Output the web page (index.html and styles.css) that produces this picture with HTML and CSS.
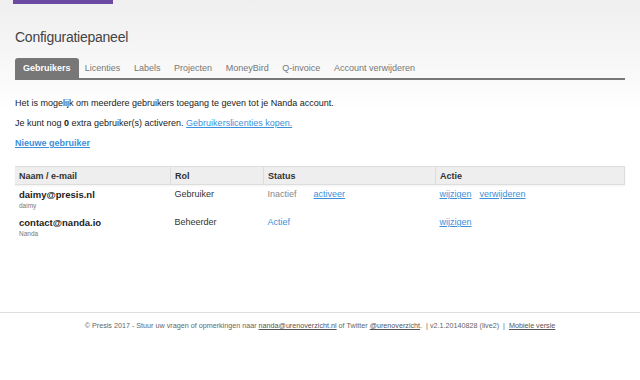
FILE: index.html
```html
<!DOCTYPE html>
<html lang="nl">
<head>
<meta charset="utf-8">
<title>Configuratiepaneel</title>
<link rel="stylesheet" href="styles.css">
</head>
<body>
<div class="page">
  <div class="topbar"><div class="brand"></div></div>
  <main class="content">
    <h1 class="title">Configuratiepaneel</h1>
    <nav class="tabs">
      <a class="tab active">Gebruikers</a>
      <a class="tab">Licenties</a>
      <a class="tab">Labels</a>
      <a class="tab">Projecten</a>
      <a class="tab">MoneyBird</a>
      <a class="tab">Q-invoice</a>
      <a class="tab">Account verwijderen</a>
    </nav>
    <p class="text first">Het is mogelijk om meerdere gebruikers toegang te geven tot je Nanda account.</p>
    <p class="text">Je kunt nog <b>0</b> extra gebruiker(s) activeren. <a class="link">Gebruikerslicenties kopen.</a></p>
    <p class="text"><a class="link strong">Nieuwe gebruiker</a></p>
    <table class="users">
      <thead>
        <tr>
          <th class="c1">Naam / e-mail</th>
          <th class="c2">Rol</th>
          <th class="c3">Status</th>
          <th class="c4">Actie</th>
        </tr>
      </thead>
      <tbody>
        <tr>
          <td><div class="email">daimy@presis.nl</div><div class="uname">daimy</div></td>
          <td>Gebruiker</td>
          <td><span class="inactive">Inactief</span><a class="link act">activeer</a></td>
          <td><a class="link">wijzigen</a><a class="link gap">verwijderen</a></td>
        </tr>
        <tr>
          <td><div class="email">contact@nanda.io</div><div class="uname">Nanda</div></td>
          <td>Beheerder</td>
          <td><span class="active-st">Actief</span></td>
          <td><a class="link">wijzigen</a></td>
        </tr>
      </tbody>
    </table>
  </main>
  <footer class="footer">
    <p>© Presis 2017 - Stuur uw vragen of opmerkingen naar <a class="flink">nanda@urenoverzicht.nl</a> of Twitter <a class="flink">@urenoverzicht</a>. &nbsp;| v2.1.20140828 (live2) &nbsp;| &nbsp;<a class="flink">Mobiele versie</a></p>
  </footer>
</div>
</body>
</html>
```

FILE: styles.css
```css
html, body {
  margin: 0;
  padding: 0;
}
body {
  font-family: "Liberation Sans", Arial, Helvetica, sans-serif;
  color: #222;
  background: linear-gradient(to bottom, #efefef 0px, #fbfbfb 90px, #ffffff 110px);
  min-height: 380px;
}
.page {
  width: 640px;
  min-height: 380px;
  display: flex;
  flex-direction: column;
}
.topbar {
  height: 0;
  position: relative;
}
.brand {
  position: absolute;
  left: 13px;
  top: 0;
  width: 100px;
  height: 4px;
  background: #6b4ba2;
}
.content {
  padding: 0 15px;
  flex: 1;
}
.title {
  margin: 29px 0 0;
  font-size: 14px;
  font-weight: normal;
  color: #444;
  line-height: 17px;
  letter-spacing: -0.25px;
}
.tabs {
  margin-top: 12px;
  display: flex;
  border-bottom: 2px solid #777;
  height: 20px;
}
.tab {
  font-size: 9px;
  color: #777;
  line-height: 20px;
  padding: 0 6.8px;
}
.tab.active {
  background: #777;
  color: #fff;
  font-weight: bold;
  border-radius: 3px 3px 0 0;
  padding: 0 8px;
  margin-right: -0.5px;
}
.text {
  margin: 0;
  font-size: 9px;
  line-height: 12px;
  color: #222;
  margin-top: 8px;
}
.text.first {
  margin-top: 17px;
}
.link {
  color: #3d8fd9;
  text-decoration: underline;
}
.strong {
  font-weight: bold;
}
.users {
  margin-top: 17px;
  width: 610px;
  border-collapse: collapse;
  font-size: 9px;
}
.users th {
  background: #eeeeee;
  text-align: left;
  font-weight: bold;
  color: #333;
  height: 17px;
  padding: 0 4px;
  border-top: 1px solid #ddd;
  border-bottom: 1px solid #ddd;
  border-left: 1px solid #ddd;
  box-shadow: 0 1px 2px rgba(0,0,0,0.06);
}
.users th:first-child { border-left: none; }
.users th:last-child { border-right: 1px solid #ddd; }
.c1 { width: 147px; }
.c2 { width: 84px; }
.c3 { width: 163px; }
.users td {
  vertical-align: top;
  padding: 4px 4px 0;
  color: #333;
}
.users tbody tr td { height: 24px; }
.email {
  font-weight: bold;
  font-size: 9.5px;
  color: #222;
}
.uname {
  font-size: 6.5px;
  color: #777;
  margin-top: 2px;
}
.inactive { color: #888; }
.active-st { color: #3d8fd9; }
.act { margin-left: 17px; }
.gap { margin-left: 8px; }
.footer {
  border-top: 1px solid #ddd;
  height: 67px;
  text-align: center;
}
.footer p {
  margin: 8px 0 0;
  font-size: 7.2px;
  color: #666;
}
.flink {
  color: #555;
  text-decoration: underline;
}
```
